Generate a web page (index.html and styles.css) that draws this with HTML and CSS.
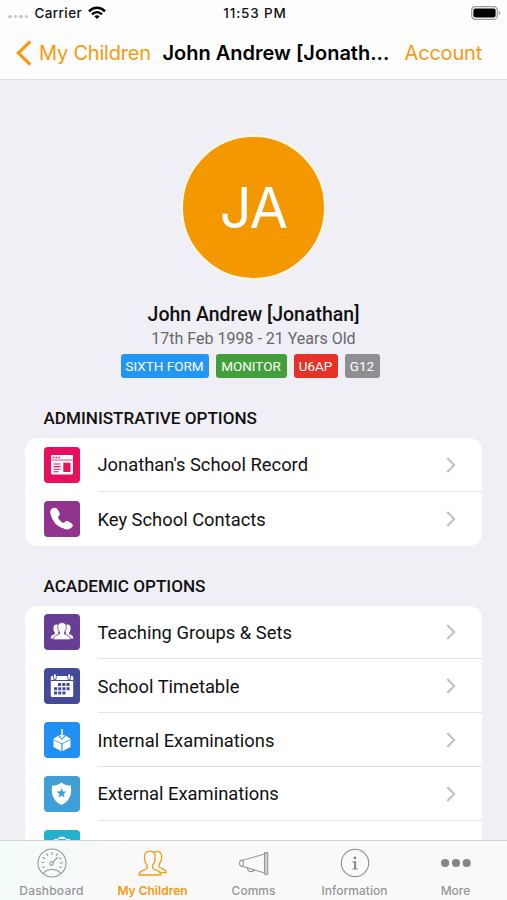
FILE: index.html
```html
<!DOCTYPE html>
<html lang="en">
<head>
    <meta charset="UTF-8">
    <meta name="viewport" content="width=device-width, initial-scale=1.0">
    <title>My Children</title>
    <link rel="stylesheet" href="styles.css">
</head>
<body>
    <div class="app">
        <header class="top">
            <div class="status-bar">
                <div class="carrier">
                    <span class="signal"><i></i><i></i><i></i><i></i></span>
                    <span>Carrier</span>
                    <svg class="wifi" width="18" height="14" viewBox="0 0 18 14" fill="none" stroke="#000" stroke-width="2.5">
                        <path d="M1 5.3C5.6.7 12.4.7 17 5.3"/>
                        <path d="M4 8.4c3-2.9 7-2.9 10 0"/>
                        <path d="M6.3 10.3c1.6-1.4 3.8-1.4 5.4 0L9 13z" fill="#000" stroke="none"/>
                    </svg>
                </div>
                <div class="time">11:53 PM</div>
                <svg class="battery" width="30" height="14" viewBox="0 0 30 14">
                    <rect x=".7" y=".7" width="25.6" height="12.6" rx="3.6" fill="#fff" stroke="#9a9a9a" stroke-width="1.2"/>
                    <rect x="2.4" y="2.4" width="22.2" height="9.2" rx="2" fill="#000"/>
                    <path d="M27.8 5v4q1.5-.6 1.5-2t-1.5-2z" fill="#999"/>
                </svg>
            </div>
            <nav class="nav-bar">
                <a class="back">
                    <svg width="16" height="26" viewBox="0 0 16 26" fill="none" stroke="#f59a0c" stroke-width="3.2"><path d="M14.4 1.3L2.3 13l12.1 11.7"/></svg>
                    <span>My Children</span>
                </a>
                <h1>John Andrew [Jonath...</h1>
                <a class="account">Account</a>
            </nav>
        </header>

        <main class="content">
            <!-- Profile -->
            <section class="profile">
                <div class="avatar">JA</div>
                <h2>John Andrew [Jonathan]</h2>
                <p>17th Feb 1998 - 21 Years Old</p>
                <div class="tags">
                    <span class="tag tag-form">SIXTH FORM</span>
                    <span class="tag tag-monitor">MONITOR</span>
                    <span class="tag tag-set">U6AP</span>
                    <span class="tag tag-room">G12</span>
                </div>
            </section>

            <!-- Administrative -->
            <section class="group">
                <h3>ADMINISTRATIVE OPTIONS</h3>
                <div class="card">
                    <div class="row">
                        <svg class="icon icon-record" viewBox="0 0 36 36">
                            <path d="M8 8h20q1 0 1 1v17q0 1.500-1.500 1.500h-19Q7 27.500 7 26V9q0-1 1-1z" fill="#fff"/>
                            <path d="M7.200 13h21.600" stroke="#e6105f" stroke-width=".8"/>
                            <path d="M8.600 10.500h8" stroke="#e6105f" stroke-width="1.500" stroke-dasharray="1.700 1.200"/>
                            <path d="M9.500 17h7M9.500 19.600h7M9.500 22.200h7M9.500 24.700h5" stroke="#e6105f" stroke-width="1.100"/>
                            <path d="M19.300 15.800h7.200v9.200h-7.200z" fill="#e6105f"/>
                        </svg>
                        <div class="cell"><span>Jonathan's School Record</span><svg class="chevron" viewBox="0 0 9 15"><path d="M1 1l6.500 6.500L1 14"/></svg></div>
                    </div>
                    <div class="row">
                        <svg class="icon icon-contacts" viewBox="0 0 36 36">
                            <path d="M8.600 7.300q2.800-1.300 4.800 1l1.900 2.800q1.200 2.300-.5 3.900-1.100 1-.4 2.200 1.500 2.700 4.200 4.500 1.200.5 2.200-.7 1.500-1.700 3.800-.5l3.200 2.100q1.900 1.600.4 3.500-2.700 3-6.600 2.100Q9.300 25.300 6.400 12.700q-.8-3.800 2.200-5.400z" fill="#fff"/>
                        </svg>
                        <div class="cell"><span>Key School Contacts</span><svg class="chevron" viewBox="0 0 9 15"><path d="M1 1l6.500 6.500L1 14"/></svg></div>
                    </div>
                </div>
            </section>

            <!-- Academic -->
            <section class="group">
                <h3>ACADEMIC OPTIONS</h3>
                <div class="card">
                    <div class="row">
                        <svg class="icon icon-groups" viewBox="0 0 36 36">
                            <g fill="#fff">
                                <path d="M12.600 10.600q3.200-.2 3.200 3.600 0 2.700-1.600 4.100v1.500l3 1.400v3.300H6.600q.1-2.700 2-3.400l2.300-1v-1.700q-1.500-1.400-1.500-4.200 0-3.500 3.200-3.600z"/>
                                <path d="M23.400 10.600q-3.200-.2-3.200 3.600 0 2.700 1.600 4.100v1.500l-3 1.400v3.300h10.600q-.1-2.700-2-3.400l-2.300-1v-1.700q1.500-1.400 1.500-4.200 0-3.500-3.200-3.600z"/>
                                <path d="M18 8.600q4.300 0 4.300 4.600 0 3.100-1.800 4.700v2l4 1.900q2 .9 2 4h-17q0-3.100 2-4l4-1.900v-2q-1.800-1.600-1.800-4.700 0-4.600 4.300-4.600z" stroke="#693d96" stroke-width=".8"/>
                            </g>
                        </svg>
                        <div class="cell"><span>Teaching Groups &amp; Sets</span><svg class="chevron" viewBox="0 0 9 15"><path d="M1 1l6.500 6.500L1 14"/></svg></div>
                    </div>
                    <div class="row">
                        <svg class="icon icon-timetable" viewBox="0 0 36 36">
                            <path d="M8 8h20q1.200 0 1.200 1.200v18.600q0 1.200-1.200 1.200H8q-1.200 0-1.200-1.200V9.200Q6.800 8 8 8z" fill="#fff"/>
                            <path d="M7 12.500h22" stroke="#45499a"/>
                            <path d="M10.800 7v3.200M25.200 7v3.200" stroke="#45499a" stroke-width="3.600" stroke-linecap="round"/>
                            <path d="M10.800 7.300v2.700M25.200 7.300v2.700" stroke="#fff" stroke-width="2" stroke-linecap="round"/>
                            <g stroke="#45499a" stroke-width="3" stroke-dasharray="3.100 1.100">
                                <path d="M14 16.600h12M10 20.800h16M10 25h12"/>
                            </g>
                        </svg>
                        <div class="cell"><span>School Timetable</span><svg class="chevron" viewBox="0 0 9 15"><path d="M1 1l6.500 6.500L1 14"/></svg></div>
                    </div>
                    <div class="row">
                        <svg class="icon icon-internal" viewBox="0 0 36 36">
                            <path d="M9.500 18l7.900 3.900v7.300l-7.900-4.300zM26.500 18l-7.900 3.900v7.300l7.900-4.300zM9 17l5.200-3.200L18 18l3.800-4.200L27 17l-8.600 4.200h-.8z" fill="#fff"/>
                            <path d="M18 7v8" stroke="#fff" stroke-width="1.500"/>
                            <path d="M15 13h6l-3 3.700z" fill="#fff"/>
                        </svg>
                        <div class="cell"><span>Internal Examinations</span><svg class="chevron" viewBox="0 0 9 15"><path d="M1 1l6.500 6.500L1 14"/></svg></div>
                    </div>
                    <div class="row">
                        <svg class="icon icon-external" viewBox="0 0 36 36">
                            <path d="M17.500 6.500q3.500 3.300 9.300 3.100 2.300 14.200-9.300 19.400Q5.900 23.800 8.200 9.600q5.800.2 9.300-3.100z" fill="#fff"/>
                            <path d="M17.500 12l1.300 3.400 3.700.2-2.900 2.300 1 3.500-3.100-2-3.100 2 1-3.500-2.900-2.300 3.700-.2z" fill="#3f9fd6"/>
                        </svg>
                        <div class="cell"><span>External Examinations</span><svg class="chevron" viewBox="0 0 9 15"><path d="M1 1l6.500 6.500L1 14"/></svg></div>
                    </div>
                    <div class="row">
                        <svg class="icon icon-next" viewBox="0 0 36 36">
                            <path d="M9 10.500q1.500-2.500 4.700-1.500 1-2.500 4.300-2.500T22.300 9q3.200-1 4.700 1.500V28H9z" fill="#fff"/>
                            <path d="M14.500 9.500h7" stroke="#23b2cb"/>
                        </svg>
                        <div class="cell"></div>
                    </div>
                </div>
            </section>
        </main>

        <footer class="tab-bar">
            <a class="tab">
                <svg width="32" height="32" viewBox="0 0 32 32" fill="none" stroke="#959595" stroke-width="1.100">
                    <circle cx="16" cy="16" r="14"/>
                    <path d="M7 26.700q3-4.200 9-4.200t9 4.200"/>
                    <circle cx="15.500" cy="16.500" r="1.700"/>
                    <path d="M16.700 15.300l5.100-5.200M16 5v3M10.600 6.500l1.300 2.500M6.800 10.200l2.400 1.500M5.500 15.500h2.800M6.500 20.800l2.200-1M21.400 6.500l-1.200 2.300M25.300 11l-2 1M26.500 16h-2.800M25.500 20.800l-2.200-1"/>
                </svg>
                <span>Dashboard</span>
            </a>
            <a class="tab active">
                <svg width="32" height="32" viewBox="0 0 32 32" fill="none" stroke="#f59a0c" stroke-width="1.300" stroke-linejoin="round">
                    <path d="M12.800 4.200c4 0 5.900 2.900 5.400 7.200-.2 3.200-1.200 5.300-2.600 6.800v2.600c.5 1.800 2.600 2 5 3 2.200.9 3 2 3.200 4.200H1.900c.2-2.200 1-3.300 3.200-4.200 2.400-1 4.500-1.200 5-3v-2.600c-1.400-1.500-2.400-3.600-2.600-6.800-.5-4.300 1.300-7.200 5.300-7.200z"/>
                    <path d="M17 5.500c1-.9 2-1.300 3.300-1.200 3.600.2 4.700 3 4.300 6.700-.2 3-1.100 4.900-2.500 6.200v2.300c.6 1.500 2.400 1.800 4.300 2.600 1.900.8 2.700 1.700 3 3.500h-6"/>
                </svg>
                <span>My Children</span>
            </a>
            <a class="tab">
                <svg width="32" height="32" viewBox="0 0 32 32" fill="none" stroke="#959595" stroke-width="1.100" stroke-linejoin="round">
                    <path d="M4.500 13.300L26.600 7v19L4.500 19.300z"/>
                    <ellipse cx="3.500" cy="16.300" rx="1.900" ry="3.200" fill="#f9f9f9"/>
                    <path d="M26.700 5.600h3v21.700h-3z" fill="#d9d9d9"/>
                    <path d="M9.300 20.900c.4 3 2.200 4.200 4.800 3.500 1.600-.4 2.300-1 2.600-1.700"/>
                </svg>
                <span>Comms</span>
            </a>
            <a class="tab">
                <svg width="32" height="32" viewBox="0 0 32 32">
                    <circle cx="16" cy="16" r="13.700" fill="none" stroke="#8f8f8f" stroke-width="1.100"/>
                    <circle cx="15.900" cy="10.900" r="1.350" fill="#858585"/>
                    <path d="M13.500 14.200h3.600v7.200h1.600v1.200h-5.300v-1.200h1.700v-6h-1.600z" fill="#858585"/>
                </svg>
                <span>Information</span>
            </a>
            <a class="tab">
                <svg width="32" height="32" viewBox="0 0 32 32" fill="#858585">
                    <circle cx="5.100" cy="16" r="4.100"/>
                    <circle cx="16" cy="16" r="4.100"/>
                    <circle cx="26.700" cy="16" r="4.100"/>
                </svg>
                <span>More</span>
            </a>
        </footer>
    </div>
</body>
</html>
```
FILE: styles.css
```css
* {
    box-sizing: border-box;
}
body {
    margin: 0;
    font-family: Roboto, "Liberation Sans", sans-serif;
    color: #111;
    background: #f0eff5;
}
h1, h2, h3, p {
    margin: 0;
    font-weight: 500;
    white-space: nowrap;
}
.app {
    width: 507px;
    height: 900px;
    display: flex;
    flex-direction: column;
    overflow: hidden;
}

/* Header */
.top {
    flex: none;
    height: 80px;
    background: #fdfdfd;
    border-bottom: 1px solid #dddde0;
    font-family: Inter, Roboto, sans-serif;
}
.status-bar {
    height: 26px;
    padding: 0 6px 0 8px;
    display: grid;
    grid-template-columns: 1fr auto 1fr;
    align-items: center;
    font-size: 13.5px;
    font-weight: 500;
}
.carrier {
    display: flex;
    align-items: center;
    gap: 6px;
    letter-spacing: 0.4px;
}
.time {
    font-size: 13.5px;
    letter-spacing: 0.85px;
    margin-right: -1px;
}
.signal {
    display: flex;
    gap: 2px;
    padding-top: 7px;
}
.signal i {
    width: 3.6px;
    height: 3.6px;
    border-radius: 50%;
    background: #c4c4c4;
}
.battery {
    justify-self: end;
}
.nav-bar {
    height: 53px;
    padding: 0 25px 0 16px;
    display: flex;
    align-items: center;
    font-size: 20px;
    color: #f59a0c;
}
.back {
    display: flex;
    align-items: center;
    gap: 7px;
    width: 146.5px;
    white-space: nowrap;
    letter-spacing: -0.2px;
}
.nav-bar h1 {
    font-size: 20px;
    font-weight: 600;
    color: #000;
}
.account {
    margin-left: auto;
    letter-spacing: -0.2px;
}

/* Profile */
.content {
    flex: 1;
    min-height: 0;
    overflow: hidden;
}
.profile {
    display: flex;
    flex-direction: column;
    align-items: center;
    padding-top: 55px;
}
.avatar {
    width: 145px;
    height: 145px;
    border: 2px solid #fff8e8;
    border-radius: 50%;
    background: #f39800;
    color: #fff;
    font: 400 56px/143px Inter, sans-serif;
    letter-spacing: -1px;
    text-align: center;
}
.profile h2 {
    margin-top: 23px;
    font-size: 19.5px;
    line-height: 24px;
}
.profile p {
    font-size: 16px;
    font-weight: 400;
    line-height: 24px;
    color: #67676b;
}
.tags {
    display: flex;
    gap: 7px;
    margin-top: 3px;
    padding-right: 7px;
}
.tag {
    height: 24px;
    border-radius: 3px;
    color: #fff;
    font-size: 13.5px;
    line-height: 24px;
    text-align: center;
}
.tag-form { width: 88px; background: #2196f3; }
.tag-monitor { width: 71px; background: #43a038; }
.tag-set { width: 44px; background: #e53327; }
.tag-room { width: 35px; background: #8e8e93; }

/* Option lists */
.group {
    padding: 27px 25px 0;
}
.group h3 {
    padding-left: 18.5px;
    font-size: 17.1px;
    line-height: 26px;
}
.card {
    margin-top: 7px;
    background: #fff;
    border-radius: 13px;
    overflow: hidden;
}
.row {
    height: 53.8px;
    padding-left: 18.5px;
    display: flex;
    align-items: center;
    gap: 18px;
}
.icon {
    flex: none;
    width: 36px;
    height: 36px;
    border-radius: 4px;
}
.icon-record { background: #e6105f; }
.icon-contacts { background: #92348f; }
.icon-groups { background: #693d96; }
.icon-timetable { background: #45499a; }
.icon-internal { background: #2190f3; }
.icon-external { background: #3f9fd6; }
.icon-next { background: #23b2cb; }
.cell {
    flex: 1;
    height: 100%;
    padding: 1px 26px 0 0;
    border-bottom: 1px solid #e3e3e5;
    display: flex;
    align-items: center;
    justify-content: space-between;
    font-size: 18.35px;
}
.row:last-child .cell {
    border-bottom: none;
}
.chevron {
    width: 10px;
    height: 16px;
    fill: none;
    stroke: #c0c0c3;
    stroke-width: 1.9;
}

/* Tab bar */
.tab-bar {
    flex: none;
    height: 60px;
    border-top: 1px solid #d2d2d3;
    background: linear-gradient(90deg, #f4fbfb, #f9f9f9 25%);
    display: grid;
    grid-template-columns: repeat(5, 101px);
    padding-left: 1px;
    font-family: Inter, Roboto, sans-serif;
    font-size: 12px;
    font-weight: 500;
    color: #969696;
}
.tab {
    display: flex;
    flex-direction: column;
    align-items: center;
    padding-top: 6px;
    line-height: 23px;
}
.tab:first-child {
    letter-spacing: 0.2px;
}
.tab.active {
    color: #f59a0c;
    font-weight: 600;
}
```
